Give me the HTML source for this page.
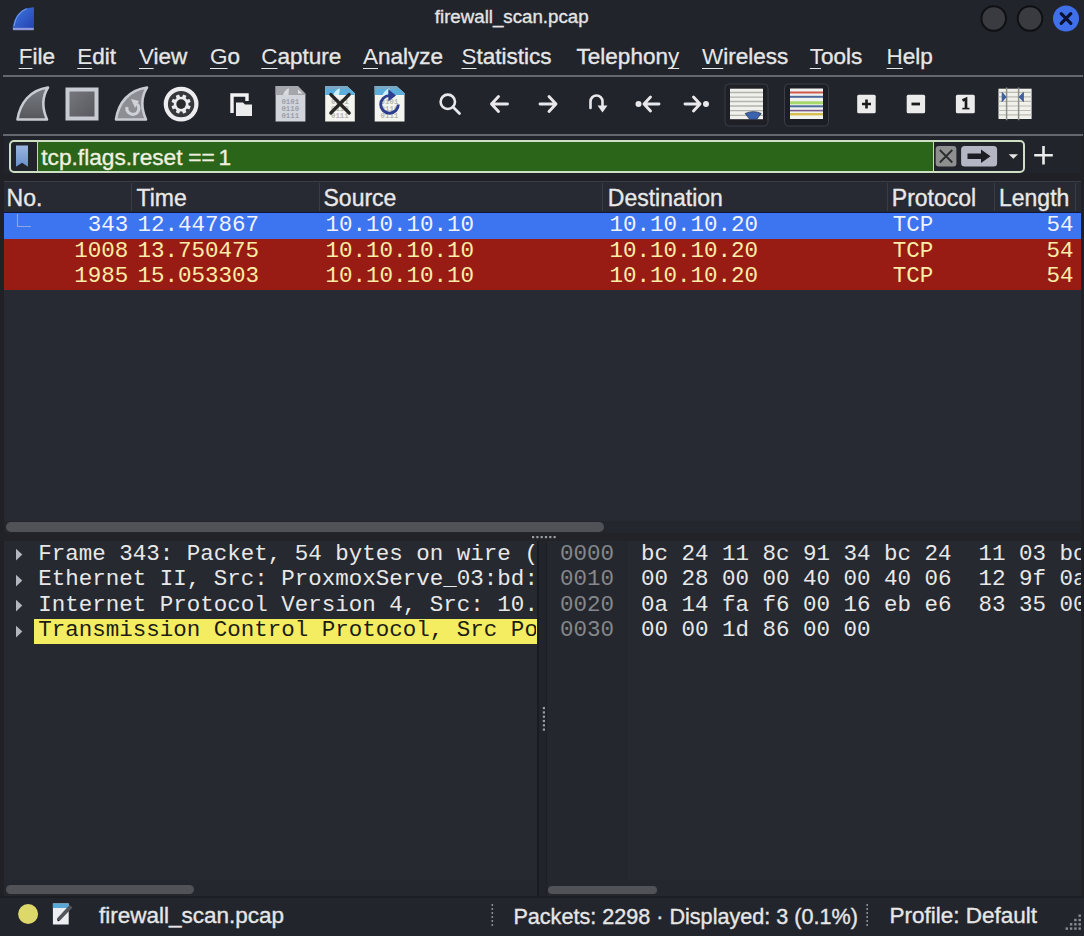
<!DOCTYPE html>
<html><head><meta charset="utf-8"><title>firewall_scan.pcap</title>
<style>
html,body{margin:0;padding:0;}
body{width:1084px;height:936px;position:relative;overflow:hidden;background:#22242c;font-family:'Liberation Sans', sans-serif;}
.t{position:absolute;white-space:pre;}
.s{-webkit-text-stroke:0.35px currentColor;}
.r{position:absolute;}
u{text-decoration:underline;text-decoration-thickness:1.3px;text-underline-offset:3.5px;-webkit-text-stroke:0;}
</style></head><body>
<svg class="r" style="left:0;top:0" width="1084" height="40">
<defs><linearGradient id="shk" x1="0" y1="0" x2="1" y2="1"><stop offset="0" stop-color="#3f7ae0"/><stop offset="1" stop-color="#2440b0"/></linearGradient></defs>
<path d="M12.5 29 C13.5 19.5 18.5 11 26.5 8.3 L34 7.3 V29 Z" fill="url(#shk)"/><path d="M13 29 H33.8" stroke="#9098dc" stroke-width="2.4"/><path d="M14 26 C15 19 19 12 26.5 8.8" fill="none" stroke="#6a96e8" stroke-width="1.2"/>
<circle cx="993.7" cy="18.5" r="12.3" fill="#3a3b41" stroke="#0f1013" stroke-width="2"/>
<circle cx="1030" cy="18.5" r="12.3" fill="#3a3b41" stroke="#0f1013" stroke-width="2"/>
<circle cx="1066" cy="18.5" r="13" fill="#3f70ea"/>
<path d="M1061.2 13.7 L1070.8 23.3 M1070.8 13.7 L1061.2 23.3" stroke="#0b1230" stroke-width="3.2" stroke-linecap="round"/>
</svg>
<div class="t s" style="left:434.80px;top:8.17px;font-size:18.7px;line-height:18.7px;color:#e4e4e4;font-family:'Liberation Sans', sans-serif;">firewall_scan.pcap</div>
<div class="t s" style="left:18.70px;top:46.35px;font-size:22.5px;line-height:22.5px;color:#e6e6e6;font-family:'Liberation Sans', sans-serif;"><u>F</u>ile</div>
<div class="t s" style="left:77.20px;top:46.35px;font-size:22.5px;line-height:22.5px;color:#e6e6e6;font-family:'Liberation Sans', sans-serif;"><u>E</u>dit</div>
<div class="t s" style="left:139.00px;top:46.35px;font-size:22.5px;line-height:22.5px;color:#e6e6e6;font-family:'Liberation Sans', sans-serif;"><u>V</u>iew</div>
<div class="t s" style="left:210.00px;top:46.35px;font-size:22.5px;line-height:22.5px;color:#e6e6e6;font-family:'Liberation Sans', sans-serif;"><u>G</u>o</div>
<div class="t s" style="left:261.30px;top:46.35px;font-size:22.5px;line-height:22.5px;color:#e6e6e6;font-family:'Liberation Sans', sans-serif;"><u>C</u>apture</div>
<div class="t s" style="left:363.00px;top:46.35px;font-size:22.5px;line-height:22.5px;color:#e6e6e6;font-family:'Liberation Sans', sans-serif;"><u>A</u>nalyze</div>
<div class="t s" style="left:461.50px;top:46.35px;font-size:22.5px;line-height:22.5px;color:#e6e6e6;font-family:'Liberation Sans', sans-serif;"><u>S</u>tatistics</div>
<div class="t s" style="left:576.60px;top:46.35px;font-size:22.5px;line-height:22.5px;color:#e6e6e6;font-family:'Liberation Sans', sans-serif;">Telephon<u>y</u></div>
<div class="t s" style="left:702.00px;top:46.35px;font-size:22.5px;line-height:22.5px;color:#e6e6e6;font-family:'Liberation Sans', sans-serif;"><u>W</u>ireless</div>
<div class="t s" style="left:809.80px;top:46.35px;font-size:22.5px;line-height:22.5px;color:#e6e6e6;font-family:'Liberation Sans', sans-serif;"><u>T</u>ools</div>
<div class="t s" style="left:886.60px;top:46.35px;font-size:22.5px;line-height:22.5px;color:#e6e6e6;font-family:'Liberation Sans', sans-serif;"><u>H</u>elp</div>
<div class="r" style="left:3.00px;top:75.40px;width:1079.50px;height:1.40px;background:#66686f;"></div>
<svg class="r" style="left:0;top:78" width="1084" height="56" viewBox="0 78 1084 56">
<defs>
<linearGradient id="fin" x1="0" y1="0" x2="0" y2="1"><stop offset="0" stop-color="#7a7c83"/><stop offset="1" stop-color="#55575d"/></linearGradient>
<linearGradient id="stp" x1="0" y1="0" x2="1" y2="1"><stop offset="0" stop-color="#77797f"/><stop offset="1" stop-color="#55575c"/></linearGradient>
</defs>
<!-- start capture fin -->
<path d="M17.5 119.5 C20 103 30 90 48 87.5 C42 97 42 108 47 119.5 Z" fill="url(#fin)" stroke="#c9cbd3" stroke-width="2.6" stroke-linejoin="round"/>
<!-- stop -->
<rect x="67.5" y="89.5" width="29" height="29" fill="url(#stp)" stroke="#c9cbd3" stroke-width="4"/>
<!-- restart fin -->
<path d="M116 119.5 C118.5 103 128.5 90 147 87.5 C141 97 141 108 146 119.5 Z" fill="#8c8e94" stroke="#c9cbd3" stroke-width="2.6" stroke-linejoin="round"/>
<path d="M127 107 A6 6 0 1 0 137 104" fill="none" stroke="#d0d2da" stroke-width="3"/>
<path d="M131 99 L139 101 L135 108 Z" fill="#d0d2da"/>
<!-- options gear -->
<circle cx="181.1" cy="104.1" r="15.3" fill="#37383c" stroke="#ededf0" stroke-width="4.2"/>
<g fill="#ededf0">
<circle cx="181.1" cy="104.1" r="7.4"/>
<rect x="179.3" y="94.4" width="3.6" height="19.4" rx="0.6" transform="rotate(22.5 181.1 104.1)"/>
<rect x="179.3" y="94.4" width="3.6" height="19.4" rx="0.6" transform="rotate(67.5 181.1 104.1)"/>
<rect x="179.3" y="94.4" width="3.6" height="19.4" rx="0.6" transform="rotate(112.5 181.1 104.1)"/>
<rect x="179.3" y="94.4" width="3.6" height="19.4" rx="0.6" transform="rotate(157.5 181.1 104.1)"/>
</g>
<circle cx="181.1" cy="104.1" r="4.8" fill="#2a2b2e"/>
<!-- open -->
<path d="M232 113 V95 H247 V101" fill="none" stroke="#f2f2f4" stroke-width="3.4"/>
<path d="M236 102.5 H243 L245 104.5 H252 V116 H236 Z" fill="#ececee"/>
<!-- file doc gray -->
<path d="M275.6 86 H297.8 L305.4 93.7 V121.6 H275.6 Z" fill="#d2d4dc"/>
<path d="M275.6 86 H297.8 L305.4 93.7 V95 H275.6 Z" fill="#a4a6ac"/>
<path d="M283 95 Q285 89 289 88.5 L288.5 95 Z" fill="#d8dae0"/>
<path d="M298 89.5 L302.5 93.5 L298 93.5 Z" fill="#e0e2e8"/>
<g fill="#9c9ea6" font-family="Liberation Mono" font-size="7.4" font-weight="bold">
<text x="281.4" y="104.2">0101</text><text x="281.4" y="111.2">0110</text><text x="281.4" y="117.9">0111</text></g>
<!-- close file -->
<path d="M325.2 86 H346.9 L354.8 93.2 V121.5 H325.2 Z" fill="#f4f5ee"/>
<path d="M325.2 86 H346.9 L354.8 93.2 V95 H325.2 Z" fill="#5eaedc"/>
<path d="M325.2 86 H346.9 L348 87.5 V89 H325.2 Z" fill="#7aa8c4"/>
<path d="M333 95 Q336 89 340 88.5 L339 95 Z" fill="#c8f0ff"/>
<g fill="#b4b6ae" font-family="Liberation Mono" font-size="7.4" font-weight="bold">
<text x="331" y="104.2">0101</text><text x="331" y="111.2">0110</text><text x="331" y="117.9">0111</text></g>
<path d="M330.8 94.5 L349.2 113 M349.2 94.5 L330.8 113" stroke="#262626" stroke-width="3.2" stroke-linecap="round"/>
<!-- reload file -->
<path d="M374.7 86 H396.5 L404.5 93.2 V121.5 H374.7 Z" fill="#f4f5ee"/>
<path d="M374.7 86 H396.5 L404.5 93.2 V95 H374.7 Z" fill="#5eaedc"/>
<path d="M374.7 86 H396.5 L397.5 87.5 V89 H374.7 Z" fill="#7aa8c4"/>
<path d="M382.5 95 Q385.5 89 389.5 88.5 L388.5 95 Z" fill="#c8f0ff"/>
<g fill="#b4b6ae" font-family="Liberation Mono" font-size="7.4" font-weight="bold">
<text x="380.6" y="104.2">0101</text><text x="380.6" y="111.2">0110</text><text x="380.6" y="117.9">0111</text></g>
<path d="M398.3 104.4 A8.8 8.8 0 1 1 389.5 95.6" fill="none" stroke="#2d3f8e" stroke-width="2.9"/>
<path d="M388.3 89.2 L396 95.4 L388.3 101.4 Z" fill="#2d3f8e"/>
<!-- search -->
<circle cx="447.8" cy="101.8" r="7.2" fill="none" stroke="#e8e8ec" stroke-width="2.6"/>
<path d="M453 107 L459.5 113.5" stroke="#e8e8ec" stroke-width="2.8" stroke-linecap="round"/>
<!-- back -->
<path d="M491.5 104 H507.5 M498.5 96.5 L491.5 104 L498.5 111.5" fill="none" stroke="#e8e8ec" stroke-width="2.9" stroke-linecap="round" stroke-linejoin="round"/>
<!-- forward -->
<path d="M540 104 H556 M549 96.5 L556 104 L549 111.5" fill="none" stroke="#e8e8ec" stroke-width="2.9" stroke-linecap="round" stroke-linejoin="round"/>
<!-- jump -->
<path d="M590.5 108 V101.5 A6 6 0 0 1 602.5 101.5 V106" fill="none" stroke="#e8e8ec" stroke-width="2.6" stroke-linecap="round"/>
<path d="M597.5 105.5 H607.5 L602.5 112.5 Z" fill="#e8e8ec"/>
<!-- first -->
<circle cx="638.5" cy="104" r="3" fill="#e8e8ec"/>
<path d="M644 104 H659 M650.5 97 L644 104 L650.5 111" fill="none" stroke="#e8e8ec" stroke-width="2.9" stroke-linecap="round" stroke-linejoin="round"/>
<!-- last -->
<path d="M685 104 H700 M693.5 97 L700 104 L693.5 111" fill="none" stroke="#e8e8ec" stroke-width="2.9" stroke-linecap="round" stroke-linejoin="round"/>
<circle cx="706" cy="104" r="3" fill="#e8e8ec"/>
<!-- autoscroll btn -->
<rect x="725" y="84" width="43" height="42" rx="4" fill="#1e2026" stroke="#393c44" stroke-width="1"/>
<rect x="730" y="88.7" width="33" height="30.5" fill="#f0f1ec"/>
<g stroke="#b2b3ac" stroke-width="1.3">
<path d="M730 92.5 H763 M730 97.2 H763 M730 101.5 H763 M730 106 H763 M730 110.7 H763 M730 115.4 H763"/></g>
<path d="M745.2 113.5 Q753.3 109.8 761.2 113.5 Q758.5 117 756.6 119.4 H749.8 Q747.8 117 745.2 113.5 Z" fill="#3b62ae" stroke="#2a3550" stroke-width="0.8"/>
<!-- colorize btn -->
<rect x="784.5" y="84" width="44" height="42" rx="4" fill="#1c1e25" stroke="#3b3e46" stroke-width="1"/>
<rect x="790" y="88.5" width="33" height="30.5" fill="#f2f2f0"/>
<rect x="790" y="91.5" width="33" height="2" fill="#cf5a4a"/>
<rect x="790" y="95.8" width="33" height="2" fill="#4a6a9a"/>
<rect x="790" y="101.3" width="33" height="3" fill="#a6d86a"/>
<rect x="790" y="105.3" width="33" height="2" fill="#4a6a9a"/>
<rect x="790" y="109.8" width="33" height="1.6" fill="#7a5a8a"/>
<rect x="790" y="113" width="33" height="2.4" fill="#d8c050"/>
<!-- zoom in/out/normal -->
<rect x="857.2" y="94.8" width="18.5" height="18.4" rx="1.5" fill="#ebebeb"/>
<path d="M862 104 H871 M866.5 99.5 V108.5" stroke="#1a1a1a" stroke-width="2.6"/>
<rect x="906.7" y="94.8" width="18.4" height="18.4" rx="1.5" fill="#ebebeb"/>
<path d="M911.5 104 H920" stroke="#1a1a1a" stroke-width="2.8"/>
<rect x="955.9" y="94.8" width="18.9" height="18.4" rx="1.5" fill="#ebebeb"/>
<path d="M962.5 100.5 L966 98.8 V108.5" fill="none" stroke="#1a1a1a" stroke-width="2.7"/><path d="M962.3 108.6 H969.5" stroke="#1a1a1a" stroke-width="1.6"/>
<!-- resize columns -->
<rect x="998.5" y="88.7" width="33.1" height="30.3" fill="#f0f1ea"/>
<g stroke="#bcbcb4" stroke-width="1.2"><path d="M998.5 92.3 H1031.6 M998.5 96.8 H1031.6 M998.5 101.3 H1031.6 M998.5 106 H1031.6 M998.5 110.5 H1031.6 M998.5 114.8 H1031.6"/></g>
<path d="M1006.6 87.4 V120.3 M1018.6 87.4 V120.3" stroke="#8e908a" stroke-width="1.5"/>
<path d="M1001.7 92.5 Q1001.5 91.8 1002.5 92.3 L1006.6 97 L1002.5 101.7 Q1001.5 102.2 1001.7 101.5 Z" fill="#3f5fa0"/>
<path d="M1023.9 92.5 Q1024.1 91.8 1023.1 92.3 L1018.6 97 L1023.1 101.7 Q1024.1 102.2 1023.9 101.5 Z" fill="#3f5fa0"/>
</svg>
<div class="r" style="left:3.00px;top:134.20px;width:1079.50px;height:1.40px;background:#66686f;"></div>
<div class="r" style="left:9px;top:139.6px;width:1016.3px;height:33.6px;box-sizing:border-box;border:2px solid #cfdfc4;border-radius:5px;background:#22242b;overflow:hidden"><div class="r" style="left:25.5px;top:0;width:895.5px;height:100%;background:#2b651a;border-left:1.4px solid #c9dcb5;border-right:1.4px solid #c9dcb5"></div></div>
<svg class="r" style="left:0;top:134" width="1084" height="48" viewBox="0 134 1084 48">
<defs><linearGradient id="bm" x1="0" y1="0" x2="0" y2="1"><stop offset="0" stop-color="#9ab6e0"/><stop offset="1" stop-color="#6a90c8"/></linearGradient></defs>
<path d="M16 145.6 H28 V166.8 L22 162.8 L16 166.8 Z" fill="url(#bm)"/>
<rect x="935.7" y="145.9" width="20.7" height="20.7" rx="3" fill="#8e9090"/>
<path d="M939.8 150 L952.3 162.5 M952.3 150 L939.8 162.5" stroke="#2a2b2c" stroke-width="1.8"/>
<rect x="961.1" y="145.9" width="36" height="20.7" rx="3.5" fill="#b4b7c3"/>
<path d="M967.5 153.5 H981 V149.5 L990.5 156.2 L981 163 V159 H967.5 Z" fill="#1d1e24"/>
<path d="M1008.7 154.3 H1018 L1013.35 158.8 Z" fill="#e6e6e6"/>
<path d="M1034.2 155.3 H1052.8 M1043.5 146 V164.6" stroke="#ececec" stroke-width="2.6"/>
</svg>
<div class="t s" style="left:41.30px;top:145.78px;font-size:22.7px;line-height:22.7px;color:#f0f0e0;font-family:'Liberation Sans', sans-serif;">tcp.flags.reset</div>
<div class="t s" style="left:188.20px;top:145.78px;font-size:22.7px;line-height:22.7px;color:#f0f0e0;font-family:'Liberation Sans', sans-serif;">==</div>
<div class="t s" style="left:218.50px;top:145.78px;font-size:22.7px;line-height:22.7px;color:#f0f0e0;font-family:'Liberation Sans', sans-serif;">1</div>
<div class="r" style="left:0.00px;top:135.50px;width:4.00px;height:761.50px;background:#1f2127;"></div>
<div class="r" style="left:4.00px;top:181.00px;width:1077.00px;height:352.00px;background:#272a32;"></div>
<div class="r" style="left:0.00px;top:173.30px;width:1084.00px;height:7.30px;background:#1f2126;"></div>
<div class="r" style="left:4.00px;top:180.60px;width:1077.00px;height:31.90px;background:#272a32;"></div>
<div class="r" style="left:4.00px;top:180.60px;width:1077.00px;height:1.40px;background:#3b3e44;"></div>
<div class="r" style="left:130.50px;top:183.00px;width:1.00px;height:28.00px;background:#3a3d44;"></div>
<div class="r" style="left:318.70px;top:183.00px;width:1.00px;height:28.00px;background:#3a3d44;"></div>
<div class="r" style="left:602.30px;top:183.00px;width:1.00px;height:28.00px;background:#3a3d44;"></div>
<div class="r" style="left:886.70px;top:183.00px;width:1.00px;height:28.00px;background:#3a3d44;"></div>
<div class="r" style="left:993.80px;top:183.00px;width:1.00px;height:28.00px;background:#3a3d44;"></div>
<div class="r" style="left:1075.30px;top:183.00px;width:1.00px;height:28.00px;background:#3a3d44;"></div>
<div class="t s" style="left:6.60px;top:186.83px;font-size:23px;line-height:23px;color:#e8e8e8;font-family:'Liberation Sans', sans-serif;">No.</div>
<div class="t s" style="left:136.50px;top:186.83px;font-size:23px;line-height:23px;color:#e8e8e8;font-family:'Liberation Sans', sans-serif;">Time</div>
<div class="t s" style="left:323.50px;top:186.83px;font-size:23px;line-height:23px;color:#e8e8e8;font-family:'Liberation Sans', sans-serif;">Source</div>
<div class="t s" style="left:607.80px;top:186.83px;font-size:23px;line-height:23px;color:#e8e8e8;font-family:'Liberation Sans', sans-serif;">Destination</div>
<div class="t s" style="left:891.80px;top:186.83px;font-size:23px;line-height:23px;color:#e8e8e8;font-family:'Liberation Sans', sans-serif;">Protocol</div>
<div class="t s" style="left:999.00px;top:186.83px;font-size:23px;line-height:23px;color:#e8e8e8;font-family:'Liberation Sans', sans-serif;">Length</div>
<div class="r" style="left:4.00px;top:212.00px;width:1077.00px;height:1.00px;background:#0e1640;"></div>
<div class="r" style="left:4.00px;top:213.00px;width:1077.00px;height:25.50px;background:#3d74f0;"></div>
<div class="t" style="left:0;width:128.2px;text-align:right;top:214.25px;font-size:22.5px;line-height:22.5px;color:#f0f2ff;font-family:'Liberation Mono', monospace">343</div>
<div class="t" style="left:137.60px;top:214.25px;font-size:22.5px;line-height:22.5px;color:#f0f2ff;font-family:'Liberation Mono', monospace;">12.447867</div>
<div class="t" style="left:325.60px;top:214.25px;font-size:22.5px;line-height:22.5px;color:#f0f2ff;font-family:'Liberation Mono', monospace;">10.10.10.10</div>
<div class="t" style="left:609.50px;top:214.25px;font-size:22.5px;line-height:22.5px;color:#f0f2ff;font-family:'Liberation Mono', monospace;">10.10.10.20</div>
<div class="t" style="left:892.70px;top:214.25px;font-size:22.5px;line-height:22.5px;color:#f0f2ff;font-family:'Liberation Mono', monospace;">TCP</div>
<div class="t" style="left:0;width:1073.4px;text-align:right;top:214.25px;font-size:22.5px;line-height:22.5px;color:#f0f2ff;font-family:'Liberation Mono', monospace">54</div>
<div class="r" style="left:4.00px;top:238.50px;width:1077.00px;height:25.50px;background:#981c14;"></div>
<div class="t" style="left:0;width:128.2px;text-align:right;top:239.75px;font-size:22.5px;line-height:22.5px;color:#fbeca6;font-family:'Liberation Mono', monospace">1008</div>
<div class="t" style="left:137.60px;top:239.75px;font-size:22.5px;line-height:22.5px;color:#fbeca6;font-family:'Liberation Mono', monospace;">13.750475</div>
<div class="t" style="left:325.60px;top:239.75px;font-size:22.5px;line-height:22.5px;color:#fbeca6;font-family:'Liberation Mono', monospace;">10.10.10.10</div>
<div class="t" style="left:609.50px;top:239.75px;font-size:22.5px;line-height:22.5px;color:#fbeca6;font-family:'Liberation Mono', monospace;">10.10.10.20</div>
<div class="t" style="left:892.70px;top:239.75px;font-size:22.5px;line-height:22.5px;color:#fbeca6;font-family:'Liberation Mono', monospace;">TCP</div>
<div class="t" style="left:0;width:1073.4px;text-align:right;top:239.75px;font-size:22.5px;line-height:22.5px;color:#fbeca6;font-family:'Liberation Mono', monospace">54</div>
<div class="r" style="left:4.00px;top:264.00px;width:1077.00px;height:25.50px;background:#981c14;"></div>
<div class="t" style="left:0;width:128.2px;text-align:right;top:265.25px;font-size:22.5px;line-height:22.5px;color:#fbeca6;font-family:'Liberation Mono', monospace">1985</div>
<div class="t" style="left:137.60px;top:265.25px;font-size:22.5px;line-height:22.5px;color:#fbeca6;font-family:'Liberation Mono', monospace;">15.053303</div>
<div class="t" style="left:325.60px;top:265.25px;font-size:22.5px;line-height:22.5px;color:#fbeca6;font-family:'Liberation Mono', monospace;">10.10.10.10</div>
<div class="t" style="left:609.50px;top:265.25px;font-size:22.5px;line-height:22.5px;color:#fbeca6;font-family:'Liberation Mono', monospace;">10.10.10.20</div>
<div class="t" style="left:892.70px;top:265.25px;font-size:22.5px;line-height:22.5px;color:#fbeca6;font-family:'Liberation Mono', monospace;">TCP</div>
<div class="t" style="left:0;width:1073.4px;text-align:right;top:265.25px;font-size:22.5px;line-height:22.5px;color:#fbeca6;font-family:'Liberation Mono', monospace">54</div>
<svg class="r" style="left:0;top:213" width="40" height="26"><path d="M17.5 1 V13.5 H31" fill="none" stroke="#8ea6e0" stroke-width="1.2"/></svg>
<div class="r" style="left:4.00px;top:521.40px;width:1077.00px;height:11.60px;background:#23262c;"></div>
<div class="r" style="left:5.60px;top:522.40px;width:598.40px;height:9.20px;background:#505257;border-radius:5px"></div>
<div class="r" style="left:0.00px;top:533.00px;width:1084.00px;height:8.00px;background:#212329;"></div>
<svg class="r" style="left:530;top:534" width="30" height="6"><g fill="#9a9ca2"><rect x="2.0" y="2" width="2.2" height="2.2"/><rect x="6.3" y="2" width="2.2" height="2.2"/><rect x="10.6" y="2" width="2.2" height="2.2"/><rect x="14.9" y="2" width="2.2" height="2.2"/><rect x="19.2" y="2" width="2.2" height="2.2"/><rect x="23.5" y="2" width="2.2" height="2.2"/></g></svg>
<div class="r" style="left:4.00px;top:541.00px;width:534.00px;height:356.00px;background:#262930;"></div>
<div class="r" style="left:538.00px;top:541.00px;width:8.50px;height:356.00px;background:#22242b;"></div>
<div class="r" style="left:537.00px;top:541.00px;width:2.00px;height:356.00px;background:#191b20;"></div>
<div class="r" style="left:545.50px;top:541.00px;width:1.30px;height:356.00px;background:#1d1f24;"></div>
<svg class="r" style="left:540;top:705" width="8" height="32"><g fill="#9a9ca2"><rect x="2.8" y="2.0" width="2.2" height="2.2"/><rect x="2.8" y="6.3" width="2.2" height="2.2"/><rect x="2.8" y="10.6" width="2.2" height="2.2"/><rect x="2.8" y="14.9" width="2.2" height="2.2"/><rect x="2.8" y="19.2" width="2.2" height="2.2"/><rect x="2.8" y="23.5" width="2.2" height="2.2"/></g></svg>
<div class="r" style="left:33.60px;top:618.60px;width:503.90px;height:25.60px;background:#f4ed62;"></div>
<svg class="r" style="left:14;top:548.0px" width="12" height="14"><path d="M2 0.8 L8.3 6.6 L2 12.4 Z" fill="#b3b6bf"/></svg>
<div class="t" style="left:38.30px;top:542.75px;font-size:22.5px;line-height:22.5px;color:#e8e8e8;font-family:'Liberation Mono', monospace;width:498px;overflow:hidden">Frame&nbsp;343:&nbsp;Packet,&nbsp;54&nbsp;bytes&nbsp;on&nbsp;wire&nbsp;(</div>
<svg class="r" style="left:14;top:573.5px" width="12" height="14"><path d="M2 0.8 L8.3 6.6 L2 12.4 Z" fill="#b3b6bf"/></svg>
<div class="t" style="left:38.30px;top:568.25px;font-size:22.5px;line-height:22.5px;color:#e8e8e8;font-family:'Liberation Mono', monospace;width:498px;overflow:hidden">Ethernet&nbsp;II,&nbsp;Src:&nbsp;ProxmoxServe_03:bd:</div>
<svg class="r" style="left:14;top:599.0px" width="12" height="14"><path d="M2 0.8 L8.3 6.6 L2 12.4 Z" fill="#b3b6bf"/></svg>
<div class="t" style="left:38.30px;top:593.75px;font-size:22.5px;line-height:22.5px;color:#e8e8e8;font-family:'Liberation Mono', monospace;width:498px;overflow:hidden">Internet&nbsp;Protocol&nbsp;Version&nbsp;4,&nbsp;Src:&nbsp;10.</div>
<svg class="r" style="left:14;top:624.5px" width="12" height="14"><path d="M2 0.8 L8.3 6.6 L2 12.4 Z" fill="#b3b6bf"/></svg>
<div class="t" style="left:38.30px;top:619.25px;font-size:22.5px;line-height:22.5px;color:#1c1c14;font-family:'Liberation Mono', monospace;width:498px;overflow:hidden">Transmission&nbsp;Control&nbsp;Protocol,&nbsp;Src&nbsp;Po</div>
<div class="r" style="left:546.50px;top:541.00px;width:534.50px;height:356.00px;background:#262930;"></div>
<div class="r" style="left:546.50px;top:541.00px;width:81.50px;height:344.00px;background:#24272e;"></div>
<div class="t" style="left:560.00px;top:542.75px;font-size:22.5px;line-height:22.5px;color:#85878b;font-family:'Liberation Mono', monospace;">0000</div>
<div class="t" style="left:641.00px;top:542.75px;font-size:22.5px;line-height:22.5px;color:#e8e8e8;font-family:'Liberation Mono', monospace;width:440px;overflow:hidden">bc 24 11 8c 91 34 bc 24  11 03 bc</div>
<div class="t" style="left:560.00px;top:568.25px;font-size:22.5px;line-height:22.5px;color:#85878b;font-family:'Liberation Mono', monospace;">0010</div>
<div class="t" style="left:641.00px;top:568.25px;font-size:22.5px;line-height:22.5px;color:#e8e8e8;font-family:'Liberation Mono', monospace;width:440px;overflow:hidden">00 28 00 00 40 00 40 06  12 9f 0a</div>
<div class="t" style="left:560.00px;top:593.75px;font-size:22.5px;line-height:22.5px;color:#85878b;font-family:'Liberation Mono', monospace;">0020</div>
<div class="t" style="left:641.00px;top:593.75px;font-size:22.5px;line-height:22.5px;color:#e8e8e8;font-family:'Liberation Mono', monospace;width:440px;overflow:hidden">0a 14 fa f6 00 16 eb e6  83 35 00</div>
<div class="t" style="left:560.00px;top:619.25px;font-size:22.5px;line-height:22.5px;color:#85878b;font-family:'Liberation Mono', monospace;">0030</div>
<div class="t" style="left:641.00px;top:619.25px;font-size:22.5px;line-height:22.5px;color:#e8e8e8;font-family:'Liberation Mono', monospace;width:440px;overflow:hidden">00 00 1d 86 00 00</div>
<div class="r" style="left:1081.00px;top:135.50px;width:3.00px;height:761.50px;background:#1f2127;"></div>
<div class="r" style="left:4.00px;top:880.00px;width:533.00px;height:17.00px;background:#24272d;"></div>
<div class="r" style="left:546.50px;top:880.00px;width:534.50px;height:17.00px;background:#24272d;"></div>
<div class="r" style="left:5.50px;top:885.00px;width:188.20px;height:8.80px;background:#505257;border-radius:5px"></div>
<div class="r" style="left:548.20px;top:885.60px;width:109.20px;height:8.70px;background:#505257;border-radius:5px"></div>
<div class="r" style="left:0.00px;top:897.00px;width:1084.00px;height:39.00px;background:#23252d;"></div>
<div class="r" style="left:0.00px;top:896.00px;width:1084.00px;height:1.60px;background:#1c1e23;"></div>
<svg class="r" style="left:0;top:897" width="1084" height="39" viewBox="0 897 1084 39">
<circle cx="28.1" cy="914" r="10" fill="#dcd86a"/>
<path d="M52.9 903.5 H68.7 V924.5 H52.9 Z" fill="#eceef2"/>
<path d="M52.9 903.5 H68.7 V908 H52.9 Z" fill="#5aa8d8"/>
<path d="M57 918.5 L69.5 905 L72.5 907.5 L60 920.5 Z" fill="#52565c"/>
<path d="M57 918.5 L60 920.5 L57.8 921.5 Z" fill="#111"/>
<path d="M492.3 904 V926 M867.2 904 V926" stroke="#8a8c92" stroke-width="1.6" stroke-dasharray="2 2"/>
<g fill="#8a8c92"><rect x="1078.5" y="914.5" width="2.4" height="2.4"/><rect x="1078.5" y="918.8" width="2.4" height="2.4"/><rect x="1074.2" y="918.8" width="2.4" height="2.4"/><rect x="1078.5" y="923.1" width="2.4" height="2.4"/><rect x="1074.2" y="923.1" width="2.4" height="2.4"/><rect x="1069.9" y="923.1" width="2.4" height="2.4"/><rect x="1078.5" y="927.4" width="2.4" height="2.4"/><rect x="1074.2" y="927.4" width="2.4" height="2.4"/><rect x="1069.9" y="927.4" width="2.4" height="2.4"/><rect x="1065.6" y="927.4" width="2.4" height="2.4"/></g>
</svg>
<div class="t s" style="left:99.00px;top:905.25px;font-size:22.5px;line-height:22.5px;color:#e6e6e6;font-family:'Liberation Sans', sans-serif;">firewall_scan.pcap</div>
<div class="t s" style="left:513.40px;top:906.02px;font-size:21.6px;line-height:21.6px;color:#e6e6e6;font-family:'Liberation Sans', sans-serif;">Packets: 2298 · Displayed: 3 (0.1%)</div>
<div class="t s" style="left:889.50px;top:905.25px;font-size:22.5px;line-height:22.5px;color:#e6e6e6;font-family:'Liberation Sans', sans-serif;">Profile: Default</div>
</body></html>
